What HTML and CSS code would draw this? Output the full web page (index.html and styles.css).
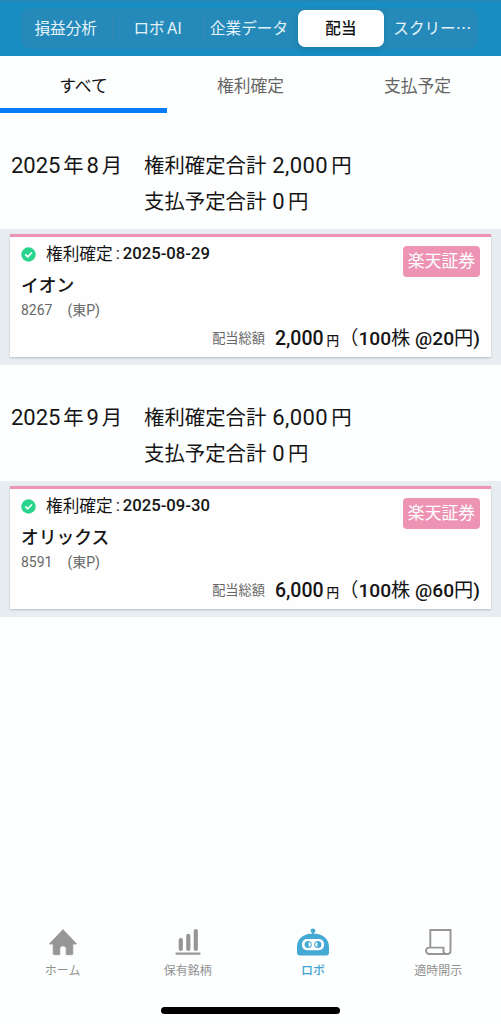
FILE: index.html
```html
<!DOCTYPE html>
<html lang="ja">
<head>
<meta charset="utf-8">
<title>配当</title>
<link rel="stylesheet" href="styles.css">
</head>
<body>
<header class="topbar">
  <nav class="segments">
    <span class="segment">損益分析</span>
    <span class="segment divided">ロボ<span class="latin">AI</span></span>
    <span class="segment divided">企業データ</span>
    <span class="segment selected">配当</span>
    <span class="segment last">スクリー<span class="dots">…</span></span>
  </nav>
</header>
<nav class="tabs">
  <span class="tab active">すべて</span>
  <span class="tab">権利確定</span>
  <span class="tab">支払予定</span>
</nav>
<main class="content">
  <section class="month">
    <div class="summary">
      <div class="date"><span class="num">2025</span><span>年</span><span class="num">8</span><span>月</span></div>
      <div class="totals">
        <div class="total"><span>権利確定合計</span><span class="num sum">2,000</span><span>円</span></div>
        <div class="total"><span>支払予定合計</span><span class="num sum">0</span><span>円</span></div>
      </div>
    </div>
    <div class="cards">
      <article class="card">
        <div class="status">
          <svg class="check" viewBox="0 0 15 15"><circle cx="7.5" cy="7.5" r="7.2" fill="#2bd48c"/><path d="M4.2 7.4l2.5 2.4 4.2-4.3" fill="none" stroke="#fff" stroke-width="1.6"/></svg>
          <span class="label">権利確定</span><span class="colon">:</span><span class="when">2025-08-29</span>
        </div>
        <span class="broker">楽天証券</span>
        <div class="name">イオン</div>
        <div class="code"><span>8267</span><span class="market">(東P)</span></div>
        <div class="amount"><span class="caption">配当総額</span><span class="value">2,000</span><span class="yen">円</span><span class="detail"><span class="open">（</span>100<span class="unit">株</span> @20<span class="unit">円</span>)</span></div>
      </article>
    </div>
  </section>
  <section class="month">
    <div class="summary">
      <div class="date"><span class="num">2025</span><span>年</span><span class="num">9</span><span>月</span></div>
      <div class="totals">
        <div class="total"><span>権利確定合計</span><span class="num sum">6,000</span><span>円</span></div>
        <div class="total"><span>支払予定合計</span><span class="num sum">0</span><span>円</span></div>
      </div>
    </div>
    <div class="cards">
      <article class="card">
        <div class="status">
          <svg class="check" viewBox="0 0 15 15"><circle cx="7.5" cy="7.5" r="7.2" fill="#2bd48c"/><path d="M4.2 7.4l2.5 2.4 4.2-4.3" fill="none" stroke="#fff" stroke-width="1.6"/></svg>
          <span class="label">権利確定</span><span class="colon">:</span><span class="when">2025-09-30</span>
        </div>
        <span class="broker">楽天証券</span>
        <div class="name">オリックス</div>
        <div class="code"><span>8591</span><span class="market">(東P)</span></div>
        <div class="amount"><span class="caption">配当総額</span><span class="value">6,000</span><span class="yen">円</span><span class="detail"><span class="open">（</span>100<span class="unit">株</span> @60<span class="unit">円</span>)</span></div>
      </article>
    </div>
  </section>
</main>
<footer class="bottom">
  <nav class="menu">
    <div class="item">
      <svg class="icon" viewBox="0 0 34 30"><path d="M17 1.5L3.4 16h3.8v9.7q0 1 1 1h5.6v-6.2q0-2.7 3.2-2.7t3.2 2.7v6.2h5.6q1 0 1-1V16h3.8z" fill="#969696" stroke="#969696" stroke-width=".8" stroke-linejoin="round"/></svg>
      <span>ホーム</span>
    </div>
    <div class="item">
      <svg class="icon" viewBox="0 0 34 30"><path d="M9.8 12v9M17.3 7.8v13.2M24.8 3v18" stroke="#969696" stroke-width="4.2" stroke-linecap="round"/><path d="M5.5 25.6h23" stroke="#969696" stroke-width="2.3" stroke-linecap="round"/></svg>
      <span>保有銘柄</span>
    </div>
    <div class="item on">
      <svg class="icon" viewBox="0 0 34 30"><circle cx="17" cy="2.8" r="2.4" fill="#44a9d3"/><path d="M16.2 3h1.6v3h-1.6zM1 24.5v-5.5C1 11 7 5.5 17 5.5S33 11 33 19v5.5q0 3-3 3H4q-3 0-3-3z" fill="#44a9d3"/><rect x="6" y="11" width="22" height="11.2" rx="5" fill="#fff"/><circle cx="12.2" cy="16.5" r="3.6" fill="#44a9d3"/><circle cx="21.8" cy="16.5" r="3.6" fill="#44a9d3"/><path d="M12.6 14.2a2.3 2.3 0 0 1 0 4.6zM21.4 14.2a2.3 2.3 0 0 0 0 4.6z" fill="#fff"/></svg>
      <span>ロボ</span>
    </div>
    <div class="item">
      <svg class="icon" viewBox="0 0 34 30"><path d="M9.3 19.5V2h20.2v20.4q0 3.6-3.6 3.6H8.2a3.2 3.2 0 0 1 0-6.4h14.3v3.6q0 2.8 3.2 2.8" fill="none" stroke="#969696" stroke-width="1.9"/></svg>
      <span>適時開示</span>
    </div>
  </nav>
  <div class="home-indicator"></div>
</footer>
</body>
</html>
```
FILE: styles.css
```css
* { box-sizing: border-box; }
body {
  margin: 0;
  height: 1024px;
  display: flex;
  flex-direction: column;
  background: #fdfefe;
  color: #151515;
  font-family: Roboto, "Noto Sans CJK JP", sans-serif;
  white-space: nowrap;
  overflow: hidden;
}
.topbar {
  height: 56px;
  padding: 7px 23px 7px 21px;
  background: #188dc1;
  border-top: 1px solid #2b82ad;
}
.segments {
  height: 41px;
  display: grid;
  grid-template-columns: repeat(5, 1fr);
  align-items: center;
  background: #258ab9;
  border-radius: 9px;
}
.segment {
  height: 25px;
  display: flex;
  align-items: baseline;
  justify-content: center;
  padding-right: 2px;
  font-size: 15.6px;
  line-height: 26px;
  color: #e4f3fa;
}
.divided { border-left: 1px solid #3588b2; }
.latin { margin-left: 2px; font-family: Inter, sans-serif; }
.dots { font-family: "Noto Sans CJK JP", sans-serif; }
.selected {
  height: 37px;
  margin: 0 3px 0 3px;
  padding: 0;
  background: #fff;
  border-radius: 7px;
  color: #111;
  font-weight: 500;
  line-height: 38px;
  box-shadow: 0 2px 5px #00507540;
}
.last { padding: 0; line-height: 23px; }
.tabs {
  height: 57px;
  display: grid;
  grid-template-columns: repeat(3, 1fr);
}
.tab {
  display: flex;
  align-items: center;
  justify-content: center;
  padding-top: 5px;
  border-bottom: 5px solid transparent;
  font-size: 16.8px;
  color: #666;
}
.active { border-color: #087cf5; color: #151515; }
.content { flex: 1; padding-top: 34px; }
.month { height: 252px; }
.summary {
  height: 82px;
  display: grid;
  grid-template-columns: 133px 1fr;
  padding-left: 11px;
  padding-top: 1px;
  font-size: 20.4px;
  line-height: 36px;
}
.date, .total { display: flex; align-items: baseline; }
.date { gap: 2.8px; }
.date .num { letter-spacing: 0; }
.num { font-size: 22px; letter-spacing: .4px; }
.sum { margin: 0 3px 0 6px; }
.cards { height: 136px; padding: 5px 10px 8px; background: #e8edf1; }
.card {
  height: 123px;
  display: grid;
  grid-template-columns: 1fr auto;
  grid-template-rows: 32px 28px 24px 31px;
  align-items: center;
  padding: 0 11px 0 11px;
  border-top: 3px solid #ed94b4;
  background: #fefefe;
  box-shadow: 0 1px 2px #b8bec5;
}
.status { display: flex; align-items: center; }
.check { width: 15px; height: 15px; margin: 2px 10px 0 0; }
.label { font-size: 16.7px; }
.colon { width: 10px; text-align: center; font-size: 17px; }
.when { font-size: 16.7px; font-weight: 500; }
.broker {
  height: 31px;
  margin-top: 17px;
  padding: 0 5px;
  border-radius: 4px;
  background: #ed94b4;
  color: #fff;
  font-size: 16.8px;
  line-height: 30px;
}
.name { grid-column: 1 / 3; padding-top: 2px; font-size: 17.8px; font-weight: 500; }
.code { grid-column: 1 / 3; display: flex; align-items: baseline; gap: 15px; font-size: 14px; color: #686868; }
.amount { grid-column: 1 / 3; display: flex; justify-content: flex-end; align-items: baseline; }
.caption { margin-right: 10px; padding-top: 4px; align-self: center; font-size: 13.2px; line-height: 18px; color: #666; }
.value { font-size: 19.5px; font-weight: 500; }
.yen { margin-left: 3px; font-size: 12.6px; font-weight: 500; }
.detail { font-size: 19.2px; font-weight: 500; }
.open, .unit { font-weight: 400; }
.bottom { height: 100px; }
.menu { height: 83px; display: grid; grid-template-columns: repeat(4, 1fr); }
.item {
  display: flex;
  flex-direction: column;
  align-items: center;
  padding-top: 4px;
  font-size: 12px;
  line-height: 18px;
  color: #929292;
}
.icon { width: 34px; height: 30px; margin-bottom: 4px; }
.on { color: #3da4cf; font-weight: 500; }
.home-indicator { width: 179px; height: 7px; margin: 0 auto; border-radius: 4px; background: #000; }
```
